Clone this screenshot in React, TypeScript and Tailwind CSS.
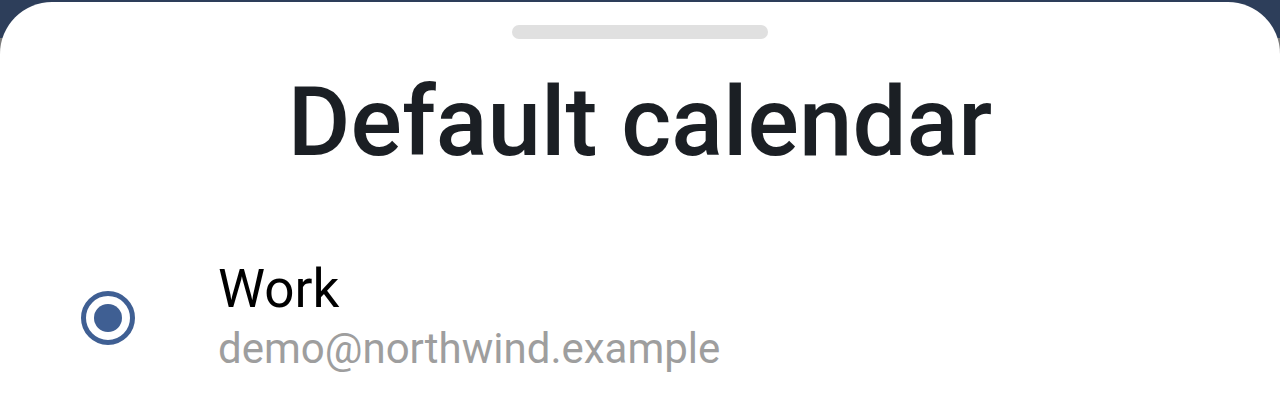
import React from 'react';

const App: React.FC = () => {
  return (
    <div className="h-[415px] w-full overflow-hidden bg-[linear-gradient(#2d3e5a_38px,#7a7a7a_38px)] pt-[2px]">
      <div
        className="flex h-full flex-col rounded-t-[52px] bg-white"
        style={{ fontFamily: 'Roboto, "Noto Sans", sans-serif' }}
      >
        <div className="flex justify-center pt-[23px]">
          <div className="h-[14px] w-[256px] rounded-full bg-[#e0e0e0]" />
        </div>

        <h1 className="mt-[35px] text-center text-[96px] font-medium leading-none text-[#1b1f24]">
          Default calendar
        </h1>

        <div className="mt-[93px] flex items-center">
          <div className="flex w-[218px] justify-start pl-[81px] pt-[2px]">
            <div className="flex h-[54px] w-[54px] items-center justify-center rounded-full border-[5px] border-[#3f5f93]">
              <div className="h-[28px] w-[28px] rounded-full bg-[#3f5f93]" />
            </div>
          </div>
          <div className="flex flex-col">
            <span className="text-[53px] leading-none text-black">Work</span>
            <span className="mt-[12px] text-[42px] leading-none text-[#9e9e9e]">
              demo@northwind.example
            </span>
          </div>
        </div>
      </div>
    </div>
  );
};

export default App;
